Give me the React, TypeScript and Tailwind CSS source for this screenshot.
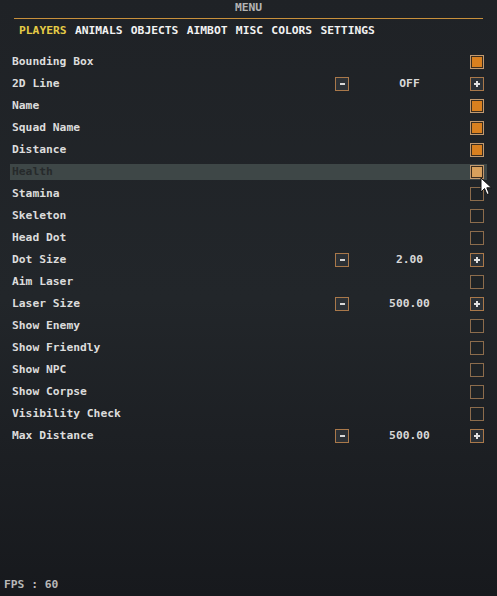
import React from "react";

type Row =
  | { label: string; kind: "check"; on: boolean }
  | { label: string; kind: "value"; value: string };

const rows: Row[] = [
  { label: "Bounding Box", kind: "check", on: true },
  { label: "2D Line", kind: "value", value: "OFF" },
  { label: "Name", kind: "check", on: true },
  { label: "Squad Name", kind: "check", on: true },
  { label: "Distance", kind: "check", on: true },
  { label: "Health", kind: "check", on: true },
  { label: "Stamina", kind: "check", on: false },
  { label: "Skeleton", kind: "check", on: false },
  { label: "Head Dot", kind: "check", on: false },
  { label: "Dot Size", kind: "value", value: "2.00" },
  { label: "Aim Laser", kind: "check", on: false },
  { label: "Laser Size", kind: "value", value: "500.00" },
  { label: "Show Enemy", kind: "check", on: false },
  { label: "Show Friendly", kind: "check", on: false },
  { label: "Show NPC", kind: "check", on: false },
  { label: "Show Corpse", kind: "check", on: false },
  { label: "Visibility Check", kind: "check", on: false },
  { label: "Max Distance", kind: "value", value: "500.00" },
];

const tabs = ["PLAYERS", "ANIMALS", "OBJECTS", "AIMBOT", "MISC", "COLORS", "SETTINGS"];

function Check({ on, hover }: { on: boolean; hover?: boolean }) {
  if (!on) {
    return <div className="w-[14px] h-[14px] border border-[#8c6c4c] bg-[#1f2326]" />;
  }
  return (
    <div className="w-[14px] h-[14px] border border-[#c29a70] p-[1px] bg-[#3a2c1e]">
      <div className={"w-full h-full " + (hover ? "bg-[#d8a05c]" : "bg-[#d9801f]")} />
    </div>
  );
}

function StepButton({ sign }: { sign: "-" | "+" }) {
  return (
    <div className="w-[14px] h-[14px] border border-[#a9784a] bg-[#2c3136] flex items-center justify-center">
      {sign === "-" ? (
        <div className="w-[5px] h-[2px] bg-[#d8d8d8]" />
      ) : (
        <div className="relative w-[6px] h-[6px]">
          <div className="absolute left-0 top-[2px] w-[6px] h-[2px] bg-[#e0e0e0]" />
          <div className="absolute left-[2px] top-0 w-[2px] h-[6px] bg-[#e0e0e0]" />
        </div>
      )}
    </div>
  );
}

export default function App() {
  return (
    <main
      className="relative w-[497px] h-[596px] overflow-hidden bg-gradient-to-b from-[#1f2226] via-[#22262a] to-[#17191d] text-[#dcdcdc] text-[11.3px] font-bold"
      style={{ fontFamily: '"DejaVu Sans Mono", "Liberation Mono", monospace' }}
    >
      {/* Title */}
      <div className="pt-[1px] text-center text-[#b4b4b4] leading-[13px]">MENU</div>
      <div className="mx-[14px] mt-[4px] h-[1px] bg-[#c8903c]" />

      {/* Tabs */}
      <div className="flex gap-[8.3px] pl-[19px] mt-[5px] leading-[13px] text-[#f2f2f2]">
        {tabs.map((t, i) => (
          <span key={t} className={i === 0 ? "text-[#e6cc46]" : ""}>
            {t}
          </span>
        ))}
      </div>

      {/* Rows */}
      <div className="mt-[14px] pl-[10px] pr-[10px]">
        {rows.map((r) => {
          const hover = r.label === "Health";
          return (
            <div key={r.label} className="h-[22px] flex items-center">
              <div
                className={
                  "flex-1 h-[16px] flex items-center pl-[2px] pr-[3px] " +
                  (hover ? "bg-[#3e4747] text-[#262a2b]" : "")
                }
              >
                <span className="flex-1">{r.label}</span>
                {r.kind === "value" ? (
                  <>
                    <StepButton sign="-" />
                    <span className="w-[121px] text-center text-[#d8d8d8]">{r.value}</span>
                    <StepButton sign="+" />
                  </>
                ) : (
                  <Check on={r.on} hover={hover} />
                )}
              </div>
            </div>
          );
        })}
      </div>

      {/* FPS */}
      <div className="absolute left-[4px] top-[578px] text-[#b8b8b8] leading-[13px]">FPS : 60</div>

      {/* Mouse cursor */}
      <svg
        className="absolute left-[480px] top-[177px]"
        width="13"
        height="19"
        viewBox="0 0 13 19"
      >
        <path
          d="M1 1 L1 15 L4.5 11.5 L7 17.5 L9.2 16.6 L6.8 10.8 L11.5 10.8 Z"
          fill="#ffffff"
          stroke="#111111"
          strokeWidth="1"
          strokeLinejoin="round"
        />
      </svg>
    </main>
  );
}
